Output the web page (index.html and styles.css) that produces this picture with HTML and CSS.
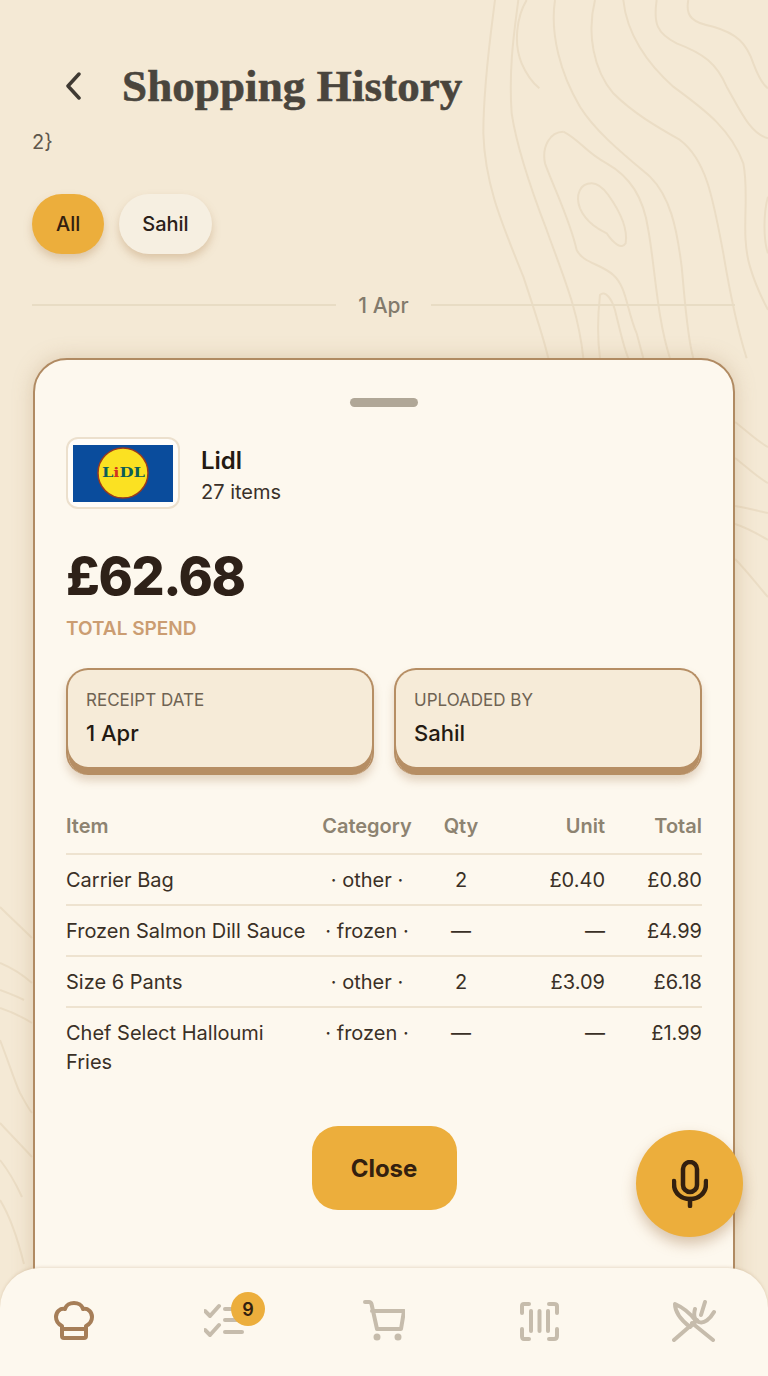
FILE: index.html
```html
<!DOCTYPE html>
<html lang="en">
<head>
<meta charset="utf-8">
<title>Shopping History</title>
<link rel="stylesheet" href="styles.css">
</head>
<body>
<svg class="contours" viewBox="0 0 768 1376" width="768" height="1376" aria-hidden="true">
  <g transform="translate(480 0) scale(.3333)">
    <path d="M45,0 C35,80 10,250 10,400 C15,560 70,680 130,830 C160,920 190,1010 205,1075"/>
    <path d="M115,0 C105,80 85,200 95,340 C110,440 150,560 200,690 C250,830 295,930 310,1075"/>
    <path d="M140,0 C110,50 100,130 125,190 C140,225 160,250 178,265"/>
    <path d="M225,0 C210,100 240,220 300,320 C350,400 440,470 510,530 C570,590 590,680 605,800 C615,900 620,1000 640,1075"/>
    <path d="M345,0 C320,100 340,210 400,280 C460,340 530,380 600,420 C680,480 700,600 730,760 C750,880 770,980 800,1075"/>
    <path d="M430,0 C440,100 500,190 580,260 C660,320 750,380 790,490 C810,590 780,700 810,800 C830,870 860,920 864,930"/>
    <path d="M530,0 C520,70 530,100 590,130 C670,160 710,190 740,260 C780,330 810,400 864,415"/>
    <path d="M625,0 C615,50 640,70 700,80 C770,100 800,130 820,190 C835,230 850,255 864,265"/>
    <path d="M250,395 C210,395 185,440 195,490 C220,560 270,660 290,750 C310,790 360,790 400,825 C440,860 440,930 470,1000 L490,1075"/>
    <path d="M250,395 C300,420 320,460 380,490 C450,530 490,590 505,690 C525,800 530,950 570,1075"/>
    <path d="M335,550 C300,550 285,585 300,625 C320,670 360,690 380,700 C400,730 425,750 437,730 C445,680 410,620 385,585 C370,565 350,550 335,550Z"/>
    <path d="M360,1075 C350,1000 355,930 360,885 C375,870 395,895 405,930 C420,990 430,1040 445,1075"/>
    <path d="M864,590 C850,640 850,720 864,760"/>
  </g>
  <path d="M735,422 C748,432 758,442 768,447"/>
  <path d="M735,458 C748,468 758,478 768,483"/>
  <path d="M735,506 C748,508 758,511 768,513"/>
  <path d="M735,524 C748,528 758,534 768,540"/>
  <path d="M735,559 C748,572 758,586 768,597"/>
  <path d="M0,907 C10,917 22,928 32,938"/>
  <path d="M0,963 C12,968 24,976 32,983"/>
  <path d="M0,990 C8,993 16,996 24,1000"/>
  <path d="M0,1008 C12,1012 24,1018 32,1023"/>
  <path d="M0,1040 C8,1060 14,1080 20,1093 C24,1100 28,1108 32,1113"/>
  <path d="M0,1123 C10,1134 22,1146 32,1157"/>
  <path d="M0,1160 C8,1170 16,1184 22,1197"/>
  <path d="M0,1200 C10,1216 18,1240 24,1264"/>
</svg>

<main class="page">
  <header class="topbar">
    <svg class="back" viewBox="0 0 16 28" width="16" height="28" aria-hidden="true"><path d="M14,2 L3,14 L14,26"/></svg>
    <h1 class="title">Shopping History</h1>
  </header>
  <p class="stray">2}</p>
  <div class="chips">
    <span class="chip chip-active">All</span>
    <span class="chip">Sahil</span>
  </div>
  <div class="date-divider"><span>1 Apr</span></div>

  <section class="sheet">
    <div class="handle"></div>
    <div class="store">
      <div class="logo-box">
        <svg viewBox="0 0 100 57" width="100" height="57" aria-hidden="true">
          <rect width="100" height="57" fill="#0a4c9c"/>
          <circle cx="50" cy="28" r="25" fill="#fbe122" stroke="#9c3a1c" stroke-width="1.500"/>
          <text class="logo-text" x="29" y="32" textLength="43" lengthAdjust="spacingAndGlyphs">L<tspan fill="#d2321e">i</tspan>DL</text>
        </svg>
      </div>
      <div class="store-meta">
        <div class="store-name">Lidl</div>
        <div class="store-count">27 items</div>
      </div>
    </div>
    <div class="amount">£62.68</div>
    <div class="amount-label">TOTAL SPEND</div>
    <div class="facts">
      <div class="fact"><div class="fact-label">RECEIPT DATE</div><div class="fact-value">1 Apr</div></div>
      <div class="fact"><div class="fact-label">UPLOADED BY</div><div class="fact-value">Sahil</div></div>
    </div>
    <table class="items">
      <colgroup><col class="c-item"><col class="c-cat"><col class="c-qty"><col class="c-unit"><col class="c-total"></colgroup>
      <thead>
        <tr><th>Item</th><th class="mid">Category</th><th class="mid">Qty</th><th class="num">Unit</th><th class="num">Total</th></tr>
      </thead>
      <tbody>
        <tr><td>Carrier Bag</td><td class="mid">· other ·</td><td class="mid">2</td><td class="num">£0.40</td><td class="num">£0.80</td></tr>
        <tr><td>Frozen Salmon Dill Sauce</td><td class="mid">· frozen ·</td><td class="mid">—</td><td class="num">—</td><td class="num">£4.99</td></tr>
        <tr><td>Size 6 Pants</td><td class="mid">· other ·</td><td class="mid">2</td><td class="num">£3.09</td><td class="num">£6.18</td></tr>
        <tr><td>Chef Select Halloumi Fries</td><td class="mid">· frozen ·</td><td class="mid">—</td><td class="num">—</td><td class="num">£1.99</td></tr>
      </tbody>
    </table>
    <div class="actions"><button class="close" type="button">Close</button></div>
  </section>
</main>

<button class="fab" type="button" aria-label="Voice">
  <svg viewBox="0 0 36 48" width="36" height="48" aria-hidden="true">
    <rect x="11" y="2" width="14" height="30" rx="7"/>
    <path d="M2,21 V24 C2,33 9,39 18,39 C27,39 34,33 34,24 V21"/>
    <path d="M18,39 V46"/>
  </svg>
</button>

<nav class="tabbar">
  <svg class="tab tab-on" viewBox="0 0 40 40" width="40" height="40" aria-hidden="true">
    <path d="M10,37 H30 Q32,37 32,35 V25 C36,23 38,20 38,16 C38,11 34,7 29,8 C28,4 24,2 20,2 C16,2 12,4 11,8 C6,7 2,11 2,16 C2,20 4,23 8,25 V35 Q8,37 10,37Z"/>
    <path d="M8,28 H32"/>
  </svg>
  <span class="tab-wrap">
    <svg class="tab tab-list" viewBox="0 0 40 36" width="40" height="36" aria-hidden="true">
      <path d="M1,8 L6,13 L15,3"/><path d="M1,27 L6,32 L15,22"/>
      <path d="M21,6 H38"/><path d="M21,17 H38"/><path d="M21,29 H38"/>
    </svg>
    <span class="badge">9</span>
  </span>
  <svg class="tab" viewBox="0 0 42 42" width="42" height="42" aria-hidden="true">
    <path d="M2,2 H6 Q8,2 8.500,4 L14,29 H38 L41,11 H9"/>
    <circle class="wheel" cx="14" cy="37" r="1.500"/><circle class="wheel" cx="35" cy="37" r="1.500"/>
  </svg>
  <svg class="tab" viewBox="0 0 40 40" width="40" height="40" aria-hidden="true">
    <path d="M10,3 H5 Q3,3 3,5 V12"/><path d="M30,3 H35 Q38,3 38,5 V12"/>
    <path d="M3,28 V35 Q3,38 5,38 H10"/><path d="M38,28 V35 Q38,38 35,38 H30"/>
    <path d="M12,10 V30"/><path d="M20.500,10 V30"/><path d="M29,10 V30"/>
  </svg>
  <svg class="tab" viewBox="0 0 44 42" width="44" height="42" aria-hidden="true">
    <path d="M3,4 C3,12 9,20 18,27 L24,21 C18,13 10,7 3,4Z"/><path d="M20,23 L41,40"/>
    <path d="M2,40 L25,20"/>
    <path d="M23,9 C21,16 23,21 27,22 C32,24 38,19 42,12"/><path d="M33,2 L29,15"/>
  </svg>
</nav>
</body>
</html>
```
FILE: styles.css
```css
* { box-sizing: border-box; }
html, body { margin: 0; padding: 0; }
body {
  position: relative;
  width: 768px;
  height: 1376px;
  overflow: hidden;
  background: #f4e9d5;
  font-family: Inter, "Liberation Sans", sans-serif;
  color: #2b2018;
}
.contours { position: absolute; inset: 0; }
.contours path { fill: none; stroke: #ebddc5; stroke-width: 2; }
.contours g path { stroke-width: 6; }

.page { position: relative; padding: 0 33px 0 32px; }
.topbar { display: flex; align-items: center; height: 60px; margin-top: 56px; padding-left: 33px; gap: 41px; }
.back { flex: none; }
.back path { fill: none; stroke: #3f3a33; stroke-width: 3.500; stroke-linecap: round; stroke-linejoin: round; }
.title { margin: 0; font-family: "Liberation Serif", serif; font-weight: 700; font-size: 45px; letter-spacing: .1px; -webkit-text-stroke: .6px #4a453d; color: #4a453d; white-space: nowrap; }
.stray { margin: 10px 0 0; height: 32px; font-size: 20px; line-height: 32px; color: #5f574c; }
.chips { display: flex; gap: 15px; margin-top: 36px; }
.chip { display: flex; align-items: center; height: 60px; padding: 0 23px; border-radius: 30px; background: #f6efe1; font-size: 20px; font-weight: 500; color: #2b2018; box-shadow: 0 5px 9px rgba(176, 132, 84, .35); }
.chip-active { background: #ecae3c; padding: 0 24px; color: #33200f; }
.date-divider { display: flex; align-items: center; gap: 22px; margin-top: 39px; height: 24px; color: #827a6c; font-size: 21px; font-weight: 500; }
.date-divider::before, .date-divider::after { content: ""; flex: 1; height: 2px; background: #e8dcc4; }

.sheet { margin: 41px 0 0 1px; width: 702px; height: 1020px; padding: 38px 31px 0; background: #fdf8ee; border: 2px solid #b08a62; border-radius: 34px; box-shadow: 0 0 20px rgba(176, 140, 100, .34); }
.handle { width: 68px; height: 9px; margin: 0 auto 30px; border-radius: 5px; background: #b0a797; }
.store { display: flex; align-items: center; gap: 21px; }
.logo-box { display: flex; align-items: center; justify-content: center; width: 114px; height: 72px; background: #fffdf9; border: 2px solid #ece0cd; border-radius: 12px; }
.logo-text { font-family: "DejaVu Serif", serif; font-weight: 700; font-size: 13px; fill: #0d5c58; }
.store-meta { padding-top: 5px; }
.store-name { font-size: 24px; font-weight: 600; line-height: 32px; color: #241a12; }
.store-count { font-size: 20px; line-height: 30px; color: #3a312a; }
.amount { margin-top: 34px; font-size: 52px; font-weight: 800; line-height: 68px; color: #2e2118; letter-spacing: -1.400px; }
.amount-label { margin-top: 5px; font-size: 19px; font-weight: 600; line-height: 26px; color: #cb9d72; }
.facts { display: grid; grid-template-columns: 1fr 1fr; gap: 20px; margin-top: 26px; }
.fact { height: 107px; padding: 18px 18px 0; background: #f6ebd8; border: 2px solid #b68e64; border-bottom: 0; border-radius: 22px; box-shadow: inset 0 -8px 0 #b68e64, 0 6px 8px rgba(170, 130, 90, .3); }
.fact-label { font-size: 17px; line-height: 24px; color: #6f6353; }
.fact-value { margin-top: 6px; font-size: 22px; font-weight: 500; line-height: 30px; color: #241a12; }

.items { width: 636px; margin-top: 27px; table-layout: fixed; border-collapse: collapse; font-size: 20px; color: #3a3026; }
.c-item { width: 256px; } .c-cat { width: 90px; } .c-qty { width: 98px; } .c-unit { width: 95px; } .c-total { width: 97px; }
.items th { height: 52px; padding: 0 0 4px; text-align: left; font-weight: 600; color: #8d8371; border-bottom: 2px solid #eee3d0; }
.items td { height: 51px; padding: 2px 0 0; line-height: 29px; border-bottom: 2px solid #eee3d0; white-space: nowrap; vertical-align: middle; }
.items tr:last-child td { border-bottom: 0; height: 70px; vertical-align: top; padding-top: 11px; }
.items tr:last-child td:first-child { white-space: normal; padding-right: 12px; }
.items th.mid, .items td.mid { text-align: center; }
.items th.num, .items td.num { text-align: right; }
.actions { display: flex; justify-content: center; margin-top: 49px; }
.close { width: 145px; height: 84px; border: 0; border-radius: 26px; background: #ecae3c; font: 700 24px Inter, "Liberation Sans", sans-serif; color: #33200f; }

.fab { position: absolute; left: 636px; top: 1130px; display: flex; align-items: center; justify-content: center; width: 107px; height: 107px; padding: 0; border: 0; border-radius: 50%; background: #ecae3c; box-shadow: 0 7px 14px rgba(160, 115, 70, .4); }
.fab rect, .fab path { fill: none; stroke: #33200f; stroke-width: 4.500; stroke-linecap: round; }

.tabbar { position: absolute; left: 0; right: 0; bottom: 0; height: 108px; display: grid; grid-template-columns: repeat(5, 155px); justify-content: center; justify-items: center; align-items: center; background: #fdf8ee; border-radius: 40px 40px 0 0; box-shadow: 0 -1px 3px rgba(176, 140, 100, .25); }
.tab { display: block; fill: none; stroke: #c6bcac; stroke-width: 4; stroke-linecap: round; stroke-linejoin: round; margin-top: -2px; }
.tab-on { stroke: #a67e58; }
.wheel { fill: #c6bcac; }
.tab-wrap { position: relative; display: block; margin-right: 10px; }
.badge { position: absolute; left: 27px; top: -13px; display: flex; align-items: center; justify-content: center; width: 34px; height: 34px; border-radius: 50%; background: #ecae3c; font-size: 18px; font-weight: 600; color: #33200f; }
```
